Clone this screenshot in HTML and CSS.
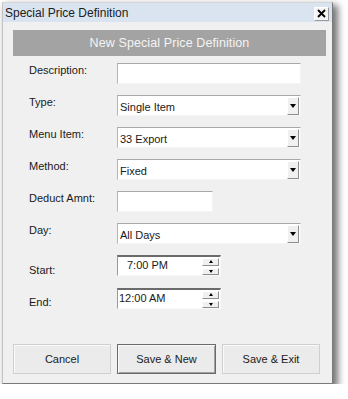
FILE: index.html
```html
<!DOCTYPE html>
<html>
<head>
<meta charset="utf-8">
<link rel="stylesheet" href="styles.css">
</head>
<body>
<div class="window">
  <div class="titlebar">
    <span class="title">Special Price Definition</span>
    <span class="close">
      <svg width="9" height="9" viewBox="0 0 9 9"><path d="M1 1L8 8M8 1L1 8" stroke="#000" stroke-width="1.8"/></svg>
    </span>
  </div>
  <div class="content">
    <div class="header">New Special Price Definition</div>
    <div class="form">
      <div class="row">
        <div class="label">Description:</div>
        <div class="field text wide"></div>
      </div>
      <div class="row">
        <div class="label">Type:</div>
        <div class="field select wide"><span class="val">Single Item</span><span class="drop"><i></i></span></div>
      </div>
      <div class="row">
        <div class="label">Menu Item:</div>
        <div class="field select wide"><span class="val">33 Export</span><span class="drop"><i></i></span></div>
      </div>
      <div class="row">
        <div class="label">Method:</div>
        <div class="field select wide"><span class="val">Fixed</span><span class="drop"><i></i></span></div>
      </div>
      <div class="row">
        <div class="label">Deduct Amnt:</div>
        <div class="field text narrow"></div>
      </div>
      <div class="row">
        <div class="label">Day:</div>
        <div class="field select wide"><span class="val">All Days</span><span class="drop"><i></i></span></div>
      </div>
      <div class="row trow">
        <div class="label low">Start:</div>
        <div class="spin"><span class="tval pad">7:00 PM</span><span class="btns"><span class="sb"><i class="up"></i></span><span class="sb"><i class="dn"></i></span></span></div>
      </div>
      <div class="row trow">
        <div class="label low">End:</div>
        <div class="spin"><span class="tval">12:00 AM</span><span class="btns"><span class="sb"><i class="up"></i></span><span class="sb"><i class="dn"></i></span></span></div>
      </div>
    </div>
    <div class="buttons">
      <div class="btn">Cancel</div>
      <div class="btn default">Save &amp; New</div>
      <div class="btn">Save &amp; Exit</div>
    </div>
  </div>
</div>
</body>
</html>
```
FILE: styles.css
```css
html, body {
  margin: 0;
  padding: 0;
  background: #ffffff;
  font-family: "Liberation Sans", Arial, sans-serif;
  font-size: 11px;
  color: #1a1a1a;
}
.window {
  margin: 2px 0 0 2px;
  width: 329px;
  height: 380px;
  background: #f0f0f0;
  border: 1px solid #7a7a7a;
  border-left-color: #c4c4c4;
  border-top-color: #d6d6d6;
  box-shadow: 4px 4px 7px 1px rgba(0,0,0,0.55);
  display: flex;
  flex-direction: column;
}
.titlebar {
  height: 19px;
  background: #dae4f0;
  display: flex;
  align-items: center;
  justify-content: space-between;
  padding: 0 4px 0 2px;
  flex: none;
}
.title {
  font-size: 12px;
  color: #202020;
}
.close {
  width: 13px;
  height: 12px;
  background: #f4f4f4;
  border: 1px solid #9a9a9a;
  border-top-color: #ffffff;
  border-left-color: #ffffff;
  display: flex;
  align-items: center;
  justify-content: center;
  margin-top: 2px;
  margin-right: -1px;
}
.content {
  flex: 1;
  display: flex;
  flex-direction: column;
  padding: 8px 6px 0 10px;
}
.header {
  height: 26px;
  background: #a3a3a3;
  color: #f4f4f4;
  font-size: 12.5px;
  display: flex;
  align-items: center;
  justify-content: center;
  letter-spacing: 0.1px;
}
.form {
  padding: 7px 0 0 16px;
  display: flex;
  flex-direction: column;
  gap: 11px;
}
.row {
  display: flex;
  height: 21px;
}
.label {
  width: 88px;
  line-height: 14px;
  flex: none;
}
.label.low {
  padding-top: 8px;
}
.trow + .trow {
  margin-top: 1px;
}
.trow + .trow .label.low {
  padding-top: 7px;
}
.field {
  height: 21px;
  box-sizing: border-box;
  background: #fff;
  border: 1px solid #f4f4f4;
  border-top-color: #a9a9a9;
  border-left-color: #b4b4b4;
  display: flex;
  align-items: center;
}
.wide { width: 184px; }
.narrow { width: 96px; }
.select .val {
  flex: 1;
  padding-left: 2px;
  padding-top: 2px;
  font-size: 11px;
}
.drop {
  width: 10px;
  height: 16px;
  margin-right: 1px;
  background: #f0f0f0;
  border: 1px solid #dcdcdc;
  border-right-color: #8e8e8e;
  border-bottom-color: #8e8e8e;
  border-top-color: #ffffff;
  border-left-color: #ffffff;
  display: flex;
  align-items: center;
  justify-content: center;
}
.drop i {
  width: 0;
  height: 0;
  border-left: 3.5px solid transparent;
  border-right: 3.5px solid transparent;
  border-top: 4px solid #000;
  margin-top: 1px;
}
.spin {
  width: 104px;
  height: 21px;
  box-sizing: border-box;
  border-top: 2px solid #6b6b6b;
  border-left: 1px solid #9a9a9a;
  border-right: 1px solid #f8f8f8;
  border-bottom: 1px solid #f8f8f8;
  background: #fff;
  display: flex;
}
.tval {
  flex: 1;
  padding-left: 1px;
  line-height: 17px;
  font-size: 11px;
}
.tval.pad { padding-left: 9px; }
.btns {
  width: 17px;
  display: flex;
  flex-direction: column;
  gap: 2px;
  padding-top: 1px;
  margin-right: 1px;
}
.sb {
  height: 7px;
  background: #f0f0f0;
  border: 1px solid #ffffff;
  border-right-color: #8e8e8e;
  border-bottom-color: #8e8e8e;
  display: flex;
  align-items: center;
  justify-content: center;
}
.up {
  width: 0; height: 0;
  border-left: 2.5px solid transparent;
  border-right: 2.5px solid transparent;
  border-bottom: 3px solid #000;
}
.dn {
  width: 0; height: 0;
  border-left: 2.5px solid transparent;
  border-right: 2.5px solid transparent;
  border-top: 3px solid #000;
}
.buttons {
  display: flex;
  gap: 6px;
  margin-top: 35px;
}
.btn {
  width: 98px;
  height: 30px;
  box-sizing: border-box;
  background: #ebebeb;
  border: 1px solid #cfcfcf;
  box-shadow: inset 1px 1px 0 #fafafa;
  display: flex;
  align-items: center;
  justify-content: center;
  font-size: 11px;
}
.btn.default {
  width: 99px;
  border: 1px solid #6a6a6a;
  box-shadow: inset 1px 1px 0 #fafafa, inset -1px -1px 0 #a0a0a0;
}
```
